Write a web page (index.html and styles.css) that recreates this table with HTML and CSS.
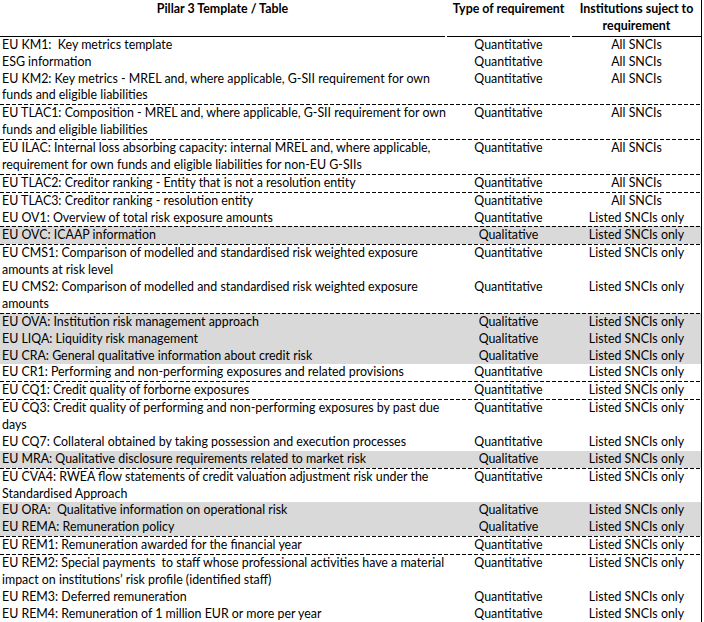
FILE: index.html
```html
<!DOCTYPE html>
<html>
<head>
<meta charset="utf-8">
<link rel="stylesheet" href="styles.css">
</head>
<body>
<div class="table">
  <div class="row head">
    <div class="c1">Pillar 3 Template / Table</div>
    <div class="c2">Type of requirement</div>
    <div class="c3">Institutions suject to<br>requirement</div>
  </div>
  <div class="row"><div class="c1">EU KM1:&nbsp; Key metrics template</div><div class="c2">Quantitative</div><div class="c3">All SNCIs</div></div>
  <div class="row"><div class="c1">ESG information</div><div class="c2">Quantitative</div><div class="c3">All SNCIs</div></div>
  <div class="row"><div class="c1">EU KM2: Key metrics - MREL and, where applicable, G-SII requirement for own<br>funds and eligible liabilities</div><div class="c2">Quantitative</div><div class="c3">All SNCIs</div></div>
  <div class="row sep"><div class="c1">EU TLAC1: Composition - MREL and, where applicable, G-SII requirement for own<br>funds and eligible liabilities</div><div class="c2">Quantitative</div><div class="c3">All SNCIs</div></div>
  <div class="row sep"><div class="c1">EU ILAC: Internal loss absorbing capacity: internal MREL and, where applicable,<br>requirement for own funds and eligible liabilities for non-EU G-SIIs</div><div class="c2">Quantitative</div><div class="c3">All SNCIs</div></div>
  <div class="row sep"><div class="c1">EU TLAC2: Creditor ranking - Entity that is not a resolution entity</div><div class="c2">Quantitative</div><div class="c3">All SNCIs</div></div>
  <div class="row sep"><div class="c1">EU TLAC3: Creditor ranking - resolution entity</div><div class="c2">Quantitative</div><div class="c3">All SNCIs</div></div>
  <div class="row"><div class="c1">EU OV1: Overview of total risk exposure amounts</div><div class="c2">Quantitative</div><div class="c3">Listed SNCIs only</div></div>
  <div class="row sep shade"><div class="c1">EU OVC: ICAAP information</div><div class="c2">Qualitative</div><div class="c3">Listed SNCIs only</div></div>
  <div class="row sep"><div class="c1">EU CMS1: Comparison of modelled and standardised risk weighted exposure<br>amounts at risk level</div><div class="c2">Quantitative</div><div class="c3">Listed SNCIs only</div></div>
  <div class="row"><div class="c1">EU CMS2: Comparison of modelled and standardised risk weighted exposure<br>amounts</div><div class="c2">Quantitative</div><div class="c3">Listed SNCIs only</div></div>
  <div class="row sep shade"><div class="c1">EU OVA: Institution risk management approach</div><div class="c2">Qualitative</div><div class="c3">Listed SNCIs only</div></div>
  <div class="row shade"><div class="c1">EU LIQA: Liquidity risk management</div><div class="c2">Qualitative</div><div class="c3">Listed SNCIs only</div></div>
  <div class="row shade"><div class="c1">EU CRA: General qualitative information about credit risk</div><div class="c2">Qualitative</div><div class="c3">Listed SNCIs only</div></div>
  <div class="row"><div class="c1">EU CR1: Performing and non-performing exposures and related provisions</div><div class="c2">Quantitative</div><div class="c3">Listed SNCIs only</div></div>
  <div class="row sep"><div class="c1">EU CQ1: Credit quality of forborne exposures</div><div class="c2">Quantitative</div><div class="c3">Listed SNCIs only</div></div>
  <div class="row sep"><div class="c1">EU CQ3: Credit quality of performing and non-performing exposures by past due<br>days</div><div class="c2">Quantitative</div><div class="c3">Listed SNCIs only</div></div>
  <div class="row"><div class="c1">EU CQ7: Collateral obtained by taking possession and execution processes</div><div class="c2">Quantitative</div><div class="c3">Listed SNCIs only</div></div>
  <div class="row shade"><div class="c1">EU MRA: Qualitative disclosure requirements related to market risk</div><div class="c2">Qualitative</div><div class="c3">Listed SNCIs only</div></div>
  <div class="row sep"><div class="c1">EU CVA4: RWEA flow statements of credit valuation adjustment risk under the<br>Standardised Approach</div><div class="c2">Quantitative</div><div class="c3">Listed SNCIs only</div></div>
  <div class="row shade"><div class="c1">EU ORA:&nbsp; Qualitative information on operational risk</div><div class="c2">Qualitative</div><div class="c3">Listed SNCIs only</div></div>
  <div class="row shade"><div class="c1">EU REMA: Remuneration policy</div><div class="c2">Qualitative</div><div class="c3">Listed SNCIs only</div></div>
  <div class="row sep"><div class="c1">EU REM1: Remuneration awarded for the financial year</div><div class="c2">Quantitative</div><div class="c3">Listed SNCIs only</div></div>
  <div class="row sep"><div class="c1">EU REM2: Special payments&nbsp; to staff whose professional activities have a material<br>impact on institutions’ risk profile (identified staff)</div><div class="c2">Quantitative</div><div class="c3">Listed SNCIs only</div></div>
  <div class="row"><div class="c1">EU REM3: Deferred remuneration</div><div class="c2">Quantitative</div><div class="c3">Listed SNCIs only</div></div>
  <div class="row last"><div class="c1">EU REM4: Remuneration of 1 million EUR or more per year</div><div class="c2">Quantitative</div><div class="c3">Listed SNCIs only</div></div>
</div>
</body>
</html>
```
FILE: styles.css
```css
html, body {
  margin: 0;
  padding: 0;
  background: #fff;
}
body {
  font-family: Lato, "Liberation Sans", sans-serif;
  font-size: 12.4px;
  line-height: 16.87px;
  color: #000;
}
.table {
  width: 701px;
  border-right: 1px solid #000;
  min-height: 622px;
  box-sizing: content-box;
}
.row {
  display: grid;
  grid-template-columns: 445px 123px 129px;
  column-gap: 2px;
  padding-right: 2px;
  white-space: nowrap;
}
.c1 {
  padding-left: 2px;
}
.c2, .c3 {
  text-align: center;
}
.head {
  padding-top: 1px;
}
.head > div {
  font-weight: bold;
  border-bottom: 1px solid #000;
  padding-bottom: 1px;
}
.head .c1 {
  text-align: center;
  padding-left: 0;
}
.sep {
  border-top: 1px solid transparent;
  background-image: repeating-linear-gradient(to right, #000 0, #000 4px, transparent 4px, transparent 6px);
  background-size: 100% 1px;
  background-repeat: no-repeat;
  background-origin: border-box;
  background-position: 0 0;
}
.shade {
  background-color: #d9d9d9;
}
.last {
  border-bottom: 1px solid #000;
}
```
